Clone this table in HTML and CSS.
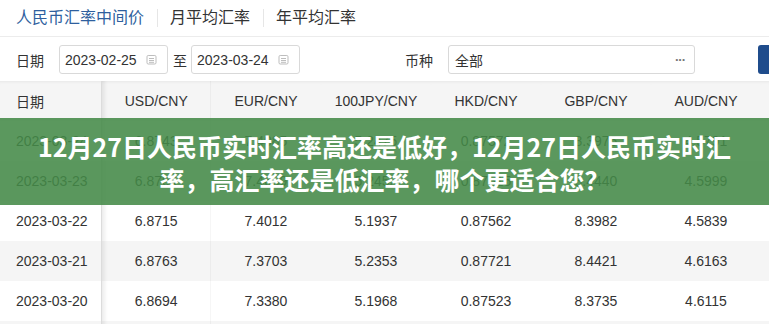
FILE: index.html
```html
<!DOCTYPE html>
<html lang="zh-CN">
<head>
<meta charset="utf-8">
<title>人民币汇率中间价</title>
<link rel="stylesheet" href="styles.css">
</head>
<body>
<div class="page">
  <nav class="tabs">
    <span class="tab active">人民币汇率中间价</span>
    <span class="tab">月平均汇率</span>
    <span class="tab">年平均汇率</span>
  </nav>
  <div class="filters">
    <span class="label">日期</span>
    <div class="input date"><span>2023-02-25</span>
      <svg class="cal" width="11" height="11" viewBox="0 0 11 11"><rect x="1" y="1.5" width="9" height="8.5" rx="1.2" fill="none" stroke="#bdbdbd"/><line x1="3" y1="4.5" x2="8" y2="4.5" stroke="#bdbdbd"/><line x1="3" y1="6.5" x2="8" y2="6.5" stroke="#bdbdbd"/><line x1="3" y1="8.3" x2="8" y2="8.3" stroke="#bdbdbd"/></svg>
    </div>
    <span class="to">至</span>
    <div class="input date"><span>2023-03-24</span>
      <svg class="cal" width="11" height="11" viewBox="0 0 11 11"><rect x="1" y="1.5" width="9" height="8.5" rx="1.2" fill="none" stroke="#bdbdbd"/><line x1="3" y1="4.5" x2="8" y2="4.5" stroke="#bdbdbd"/><line x1="3" y1="6.5" x2="8" y2="6.5" stroke="#bdbdbd"/><line x1="3" y1="8.3" x2="8" y2="8.3" stroke="#bdbdbd"/></svg>
    </div>
    <span class="label currency">币种</span>
    <div class="input select"><span>全部</span><span class="dots">···</span></div>
    <button class="search" aria-label="查询"></button>
  </div>
  <div class="table-wrap">
    <table class="rates">
      <colgroup><col class="c-date"><col class="c-val"><col class="c-val"><col class="c-val"><col class="c-val"><col class="c-val"><col class="c-val"><col></colgroup>
      <thead>
        <tr><th>日期</th><th>USD/CNY</th><th>EUR/CNY</th><th>100JPY/CNY</th><th>HKD/CNY</th><th>GBP/CNY</th><th>AUD/CNY</th><th></th></tr>
      </thead>
      <tbody>
        <tr><td>2023-03-24</td><td>6.8743</td><td>7.4085</td><td>5.2475</td><td>0.87572</td><td>8.3976</td><td>4.5791</td><td></td></tr>
        <tr><td>2023-03-23</td><td>6.8704</td><td>7.4659</td><td>5.2452</td><td>0.87515</td><td>8.4440</td><td>4.5999</td><td></td></tr>
        <tr><td>2023-03-22</td><td>6.8715</td><td>7.4012</td><td>5.1937</td><td>0.87562</td><td>8.3982</td><td>4.5839</td><td></td></tr>
        <tr><td>2023-03-21</td><td>6.8763</td><td>7.3703</td><td>5.2353</td><td>0.87721</td><td>8.4421</td><td>4.6163</td><td></td></tr>
        <tr><td>2023-03-20</td><td>6.8694</td><td>7.3380</td><td>5.1968</td><td>0.87523</td><td>8.3735</td><td>4.6115</td><td></td></tr>
        <tr><td></td><td></td><td></td><td></td><td></td><td></td><td></td><td></td></tr>
      </tbody>
    </table>
    <div class="banner">12月27日人民币实时汇率高还是低好，12月27日人民币实时汇率，高汇率还是低汇率，哪个更适合您？</div>
  </div>
</div>
</body>
</html>
```

FILE: styles.css
```css
html, body {
  margin: 0;
  padding: 0;
  background: #fff;
}
body {
  width: 769px;
  height: 324px;
  overflow: hidden;
  font-family: "Liberation Sans", "Noto Sans CJK SC", sans-serif;
  color: #333;
}
.page {
  width: 769px;
}
.tabs {
  display: flex;
  align-items: center;
  height: 36px;
  padding-left: 16px;
  border-bottom: 1px solid #ececec;
  font-size: 16px;
}
.tab {
  color: #333;
  line-height: 18px;
}
.tab + .tab {
  margin-left: 13px;
  padding-left: 12px;
  border-left: 1px solid #e6e6e6;
}
.tab.active {
  color: #2f5f9e;
}
.filters {
  display: flex;
  align-items: center;
  padding: 8px 0 0 16px;
  font-size: 14px;
  white-space: nowrap;
}
.filters > * {
  flex-shrink: 0;
}
.label {
  color: #333;
  margin-right: 15px;
}
.label.currency {
  margin-left: 105px;
}
.input {
  box-sizing: border-box;
  height: 29px;
  border: 1px solid #d9d9d9;
  border-radius: 3px;
  display: flex;
  align-items: center;
  justify-content: space-between;
  color: #333;
}
.input.date {
  width: 109px;
  padding: 0 10px 0 5px;
}
.cal {
  display: block;
}
.to {
  margin: 0 4px 0 5px;
}
.input.select {
  width: 247px;
  padding: 0 9px 0 6px;
}
.dots {
  color: #777;
  font-size: 13px;
  font-weight: bold;
  letter-spacing: -1px;
}
.search {
  margin-left: 63px;
  width: 64px;
  height: 29px;
  border: 0;
  border-radius: 3px;
  background: #1f4c8c;
}
.table-wrap {
  position: relative;
  margin-top: 7px;
}
.rates {
  width: 769px;
  table-layout: fixed;
  border-collapse: collapse;
  font-size: 14px;
}
.c-date { width: 101px; }
.c-val { width: 110px; }
.rates th,
.rates td {
  height: 40px;
  padding: 0;
  text-align: center;
  font-weight: normal;
  color: #333;
  white-space: nowrap;
}
.rates th {
  background: #f5f5f5;
  box-shadow: inset 0 3px 3px -2px rgba(0, 0, 0, 0.06);
}
.rates th:first-child,
.rates td:first-child {
  text-align: left;
  padding-left: 16px;
}
.rates th:nth-child(2),
.rates td:nth-child(2) {
  border-left: 1px solid #dcdcdc;
  background-image: linear-gradient(90deg, rgba(0, 0, 0, 0.08), rgba(0, 0, 0, 0) 6px);
}
.rates tbody tr:nth-child(even) td {
  background-color: #f5f5f5;
}
.banner {
  position: absolute;
  top: 37px;
  left: 0;
  right: 0;
  height: 87px;
  box-sizing: border-box;
  padding: 12px 36px 0;
  background: rgba(68, 138, 72, 0.88);
  color: #fff;
  font-family: "Noto Sans CJK SC", sans-serif;
  font-weight: 700;
  font-size: 25px;
  line-height: 33px;
  text-align: center;
}
```
